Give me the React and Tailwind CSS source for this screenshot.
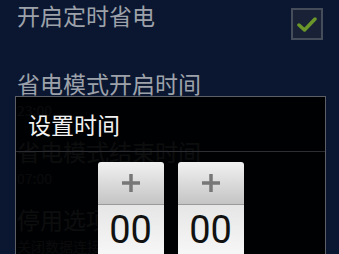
export default function App() {
  const font = { fontFamily: '"Noto Sans CJK SC", "Noto Sans", sans-serif' }

  const rows = [
    { title: '开启定时省电', summary: '', check: true },
    { title: '省电模式开启时间', summary: '23:00' },
    { title: '省电模式结束时间', summary: '07:00' },
    { title: '停用选项', summary: '关闭数据连接' },
  ]

  const stepper = (
    <div className="w-[66px] overflow-hidden rounded-t-[3px]">
      <div className="flex h-[43px] items-center justify-center border-b border-[#9a9a9a] bg-gradient-to-b from-[#f2f2f2] to-[#c4c4c4]">
        <svg width="22" height="22" viewBox="0 0 22 22">
          <path d="M11 2 V20 M2 11 H20" stroke="#777" strokeWidth="3.5" />
        </svg>
      </div>
      <div
        className="flex h-[60px] justify-center bg-gradient-to-b from-[#e6e6e6] to-[#fafafa] pt-[5px] text-[38px] leading-[40px] text-[#111]"
        style={{ fontFamily: 'Roboto, "Noto Sans", sans-serif' }}
      >
        00
      </div>
    </div>
  )

  return (
    <div
      className="relative h-[254px] w-[339px] overflow-hidden bg-[#0b1630]"
      style={font}
    >
      <div className="flex flex-col">
        {rows.map((row) => (
          <div key={row.title} className="flex h-[68px] items-start justify-between pl-[17px] pr-[16px]">
            <div className="pt-[1px]">
              <p className="text-[23px] leading-[28px] text-[#9da2aa]">{row.title}</p>
              {row.summary && (
                <p className="mt-[4px] text-[14px] leading-[18px] text-[#7d838c]">{row.summary}</p>
              )}
            </div>
            {row.check && (
              <div className="mt-[8px] flex h-[32px] w-[32px] items-center justify-center border-2 border-[#454c5a] bg-[#182136]">
                <svg width="20" height="16" viewBox="0 0 20 16">
                  <path d="M2 9 L7.5 14 L18 3" fill="none" stroke="#6a962a" strokeWidth="3.5" strokeLinecap="round" strokeLinejoin="round" />
                </svg>
              </div>
            )}
          </div>
        ))}
      </div>

      <div className="absolute left-[15px] top-[96px] h-[200px] w-[311px] border border-[#5c5f66] bg-black/[0.92]">
        <div className="flex h-[55px] items-center border-b border-[#2c2e33] pl-[12px]">
          <p className="text-[23px] leading-[28px] text-[#f2f2f2]">设置时间</p>
        </div>
        <div className="mt-[10px] flex justify-center gap-[14px]">
          {stepper}
          {stepper}
        </div>
      </div>
    </div>
  )
}
